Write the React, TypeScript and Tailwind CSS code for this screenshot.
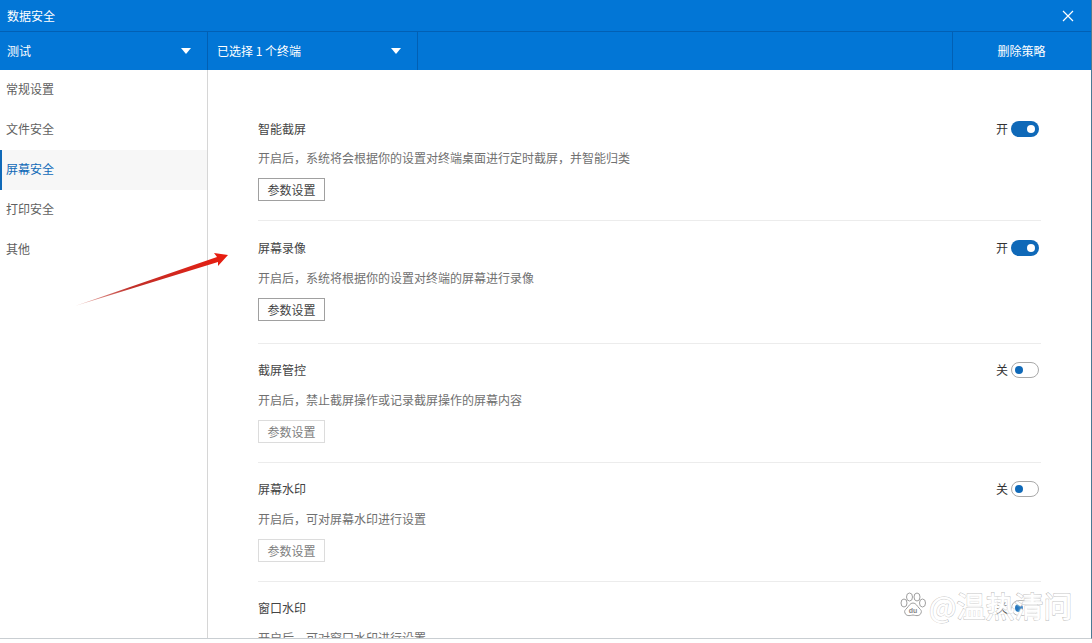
const font = { fontFamily: '"Noto Sans CJK SC", "Liberation Sans", sans-serif' };

const menu = ['常规设置', '文件安全', '屏幕安全', '打印安全', '其他'];

const rows = [
  { title: '智能截屏', desc: '开启后，系统将会根据你的设置对终端桌面进行定时截屏，并智能归类', on: true, cls: 'pt-[50px] h-[151px]', descCls: 'mt-[11px]', btnCls: 'mt-[11px]' },
  { title: '屏幕录像', desc: '开启后，系统将根据你的设置对终端的屏幕进行录像', on: true, cls: 'pt-[18px] h-[123px]', descCls: 'mt-[12px]', btnCls: 'mt-[11px]' },
  { title: '截屏管控', desc: '开启后，禁止截屏操作或记录截屏操作的屏幕内容', on: false, cls: 'pt-[17px] h-[119px]', descCls: 'mt-[12px]', btnCls: 'mt-[11px]' },
  { title: '屏幕水印', desc: '开启后，可对屏幕水印进行设置', on: false, cls: 'pt-[17px] h-[119px]', descCls: 'mt-[12px]', btnCls: 'mt-[11px]' },
  { title: '窗口水印', desc: '开启后，可对窗口水印进行设置', on: false, cls: 'pt-[17px] h-[119px]', descCls: 'mt-[12px]', btnCls: 'mt-[11px]' },
];

function Caret() {
  return <span className="w-0 h-0 border-x-[5px] border-x-transparent border-t-[6px] border-t-white" />;
}

function Toggle({ on }: { on: boolean }) {
  return (
    <span className="flex items-center gap-[3px] mr-[2px]">
      <span className="text-[12px] leading-4 text-[#333]">{on ? '开' : '关'}</span>
      {on ? (
        <span className="w-[28px] h-[16px] rounded-full bg-[#0f69b8] flex items-center justify-end pr-[4px]">
          <span className="w-[8px] h-[8px] rounded-full bg-white" />
        </span>
      ) : (
        <span className="w-[28px] h-[16px] rounded-full bg-white border border-[#a9a9a9] flex items-center pl-[3px]">
          <span className="w-[8px] h-[8px] rounded-full bg-[#0f69b8]" />
        </span>
      )}
    </span>
  );
}

function Row({ title, desc, on, cls, descCls, btnCls, last }: { title: string; desc: string; on: boolean; cls: string; descCls: string; btnCls: string; last: boolean }) {
  return (
    <div className={`${cls} shrink-0 ${last ? '' : 'border-b border-[#ececec]'}`}>
      <div className="flex items-center justify-between h-[18px]">
        <span className="text-[12px] text-[#444]">{title}</span>
        <Toggle on={on} />
      </div>
      <p className={`${descCls} text-[12px] leading-[18px] text-[#707070]`}>{desc}</p>
      <button
        className={`${btnCls} block w-[67px] h-[23px] border text-[12px] leading-none bg-white ${
          on ? 'border-[#a0a0a0] text-[#444]' : 'border-[#dcdcdc] text-[#808080]'
        }`}
      >
        参数设置
      </button>
    </div>
  );
}

export default function App() {
  return (
    <div className="relative w-[1092px] h-[643px] bg-white overflow-hidden" style={font}>
      <div className="h-[639px] flex flex-col border-b border-r border-[#c9ced2] border-r-[#4a7a94]">
        <div className="h-[32px] shrink-0 bg-[#0276d6] border-b border-[#0260b4] flex items-center justify-between pl-[7px] pr-[17px]">
          <span className="text-[12px] text-white">数据安全</span>
          <svg width="12" height="12" viewBox="0 0 12 12" fill="none" stroke="white" strokeWidth="1.2">
            <path d="M1 1l10 10M11 1L1 11" />
          </svg>
        </div>
        <div className="h-[38px] shrink-0 bg-[#0276d6] flex text-[12px] text-white">
          <div className="w-[208px] border-r border-[#0260b4] flex items-center justify-between pl-[7px] pr-[16px]">
            <span>测试</span>
            <Caret />
          </div>
          <div className="w-[210px] border-r border-[#0260b4] flex items-center justify-between pl-[9px] pr-[16px]">
            <span>已选择 1 个终端</span>
            <Caret />
          </div>
          <div className="flex-1" />
          <div className="w-[139px] border-l border-[#0260b4] flex items-center justify-center pr-[1px]">删除策略</div>
        </div>
        <div className="flex-1 flex min-h-0">
          <div className="w-[208px] shrink-0 border-r border-[#d6d6d6]">
            {menu.map((m, i) => (
              <div
                key={m}
                className={`h-[40px] pb-[2px] flex items-center text-[12px] ${
                  i === 2
                    ? 'bg-[#f7f7f7] text-[#0f69b8] border-l-2 border-[#0f69b8] pl-[4px]'
                    : 'text-[#606060] pl-[6px]'
                }`}
              >
                {m}
              </div>
            ))}
          </div>
          <div className="flex-1 min-w-0 overflow-hidden pl-[50px] pr-[50px] flex flex-col">
            {rows.map((r, i) => (
              <Row key={r.title} {...r} last={i === rows.length - 1} />
            ))}
          </div>
        </div>
      </div>

      {/* red annotation arrow */}
      <svg className="absolute left-[70px] top-[250px]" width="160" height="60" viewBox="0 0 160 60">
        <defs>
          <linearGradient id="arrow" x1="0" y1="1" x2="1" y2="0">
            <stop offset="0" stopColor="#ecc4be" />
            <stop offset="0.35" stopColor="#c0302a" />
            <stop offset="1" stopColor="#ea1c0e" />
          </linearGradient>
        </defs>
        <path d="M5 56L147 7L144 3L158 5L148 16L148 12Z" fill="url(#arrow)" />
      </svg>

      {/* watermark */}
      <div className="absolute left-[899px] top-[588px] flex items-center h-[34px]">
        <svg width="28" height="28" viewBox="0 0 28 28" fill="white" stroke="#a0a0a0" strokeWidth="1">
          <ellipse cx="5" cy="12" rx="3" ry="4" />
          <ellipse cx="10.5" cy="6" rx="3" ry="4" />
          <ellipse cx="18" cy="6" rx="3" ry="4" />
          <ellipse cx="23.5" cy="12" rx="3" ry="4" />
          <path d="M14 12c-3 0-4 3-6 5-2 2-3 3-2 5 1 3 4 3 8 2 4 1 7 1 8-2 1-2 0-3-2-5-2-2-3-5-6-5z" />
          <text x="14" y="22" textAnchor="middle" fontSize="7" fontWeight="700" fill="#888" stroke="none" fontFamily="Liberation Sans, sans-serif">du</text>
        </svg>
        <span className="ml-[2px] text-[29px] leading-[34px] text-white [-webkit-text-stroke:1px_#949494] [paint-order:stroke_fill] [text-shadow:0_0_2px_white,0_0_4px_white]">@温热清问</span>
      </div>
    </div>
  );
}
